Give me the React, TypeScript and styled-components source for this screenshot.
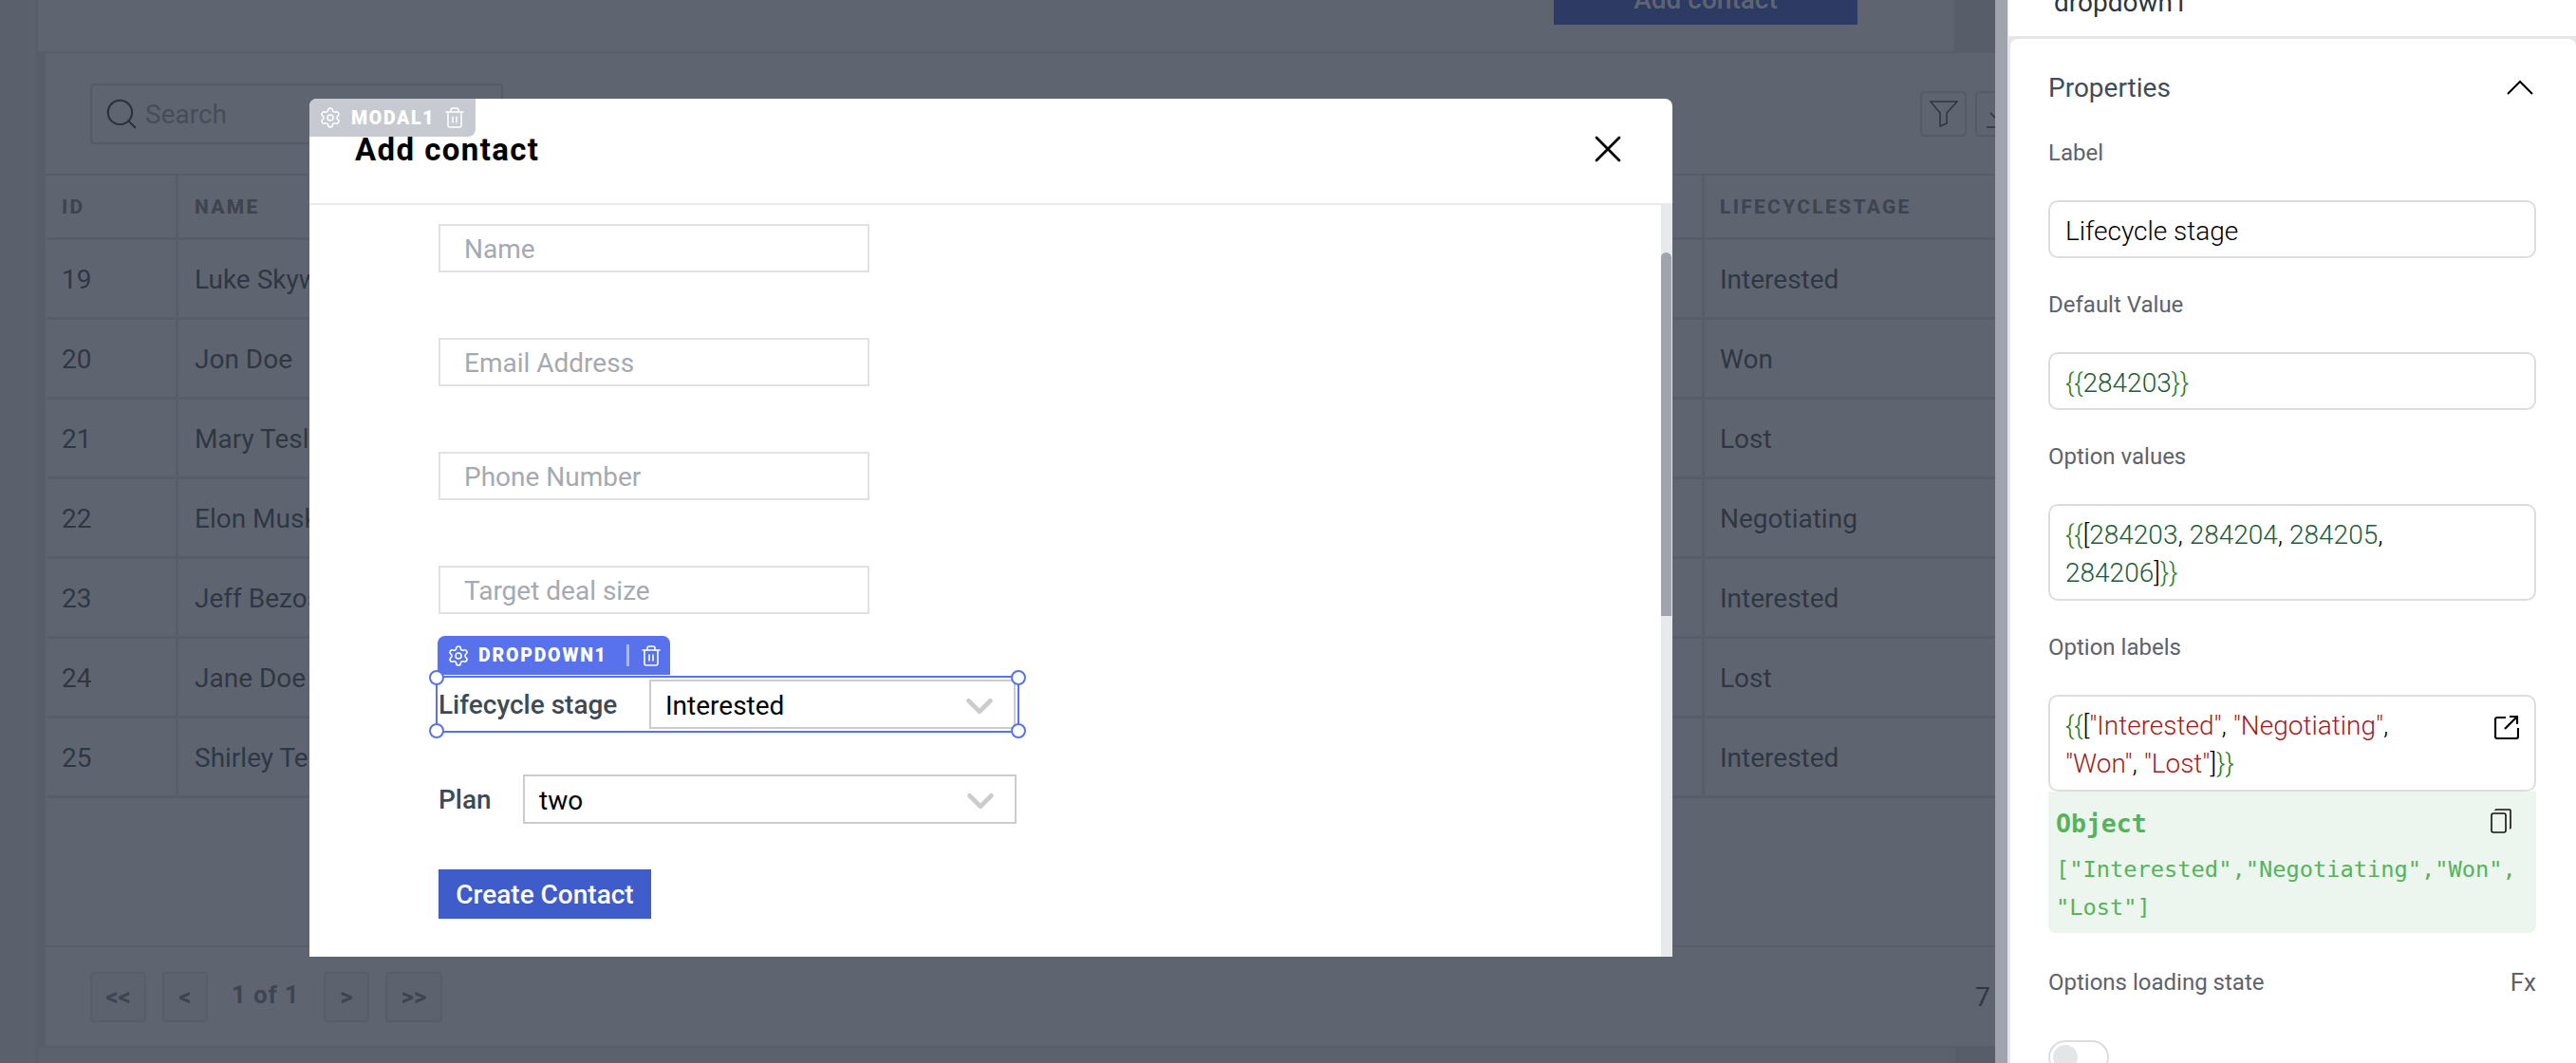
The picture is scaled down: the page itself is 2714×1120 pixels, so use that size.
import { Fragment } from "react";
import styled, { createGlobalStyle } from "styled-components";
import { ChevronDown, Search, Settings, Trash2, X } from "lucide-react";

const GlobalStyle = createGlobalStyle`
  html, body {
    margin: 0;
    padding: 0;
    width: 2714px;
    height: 1120px;
    overflow: hidden;
    background: #fff;
    font-family: Roboto, "Liberation Sans", sans-serif;
  }
  * {
    box-sizing: border-box;
  }
`;

const Shell = styled.div`
  display: flex;
  width: 2714px;
  height: 1120px;
  overflow: hidden;
`;

const Canvas = styled.div`
  position: relative;
  display: flex;
  flex: none;
  width: 2102px;
  height: 1120px;
  overflow: hidden;
  background: #5f6570;
`;

const Rail = styled.div`
  flex: none;
  width: 40px;
  background: #5b616c;
  border-right: 2px solid #585e69;
`;

const Content = styled.div`
  display: flex;
  flex-direction: column;
  flex: none;
  width: 2062px;
  background: #585e69;
`;

const TopPanel = styled.div`
  display: flex;
  align-items: flex-end;
  justify-content: flex-end;
  flex: none;
  width: 2020px;
  height: 54px;
  padding: 0 101px 28px 0;
  background: #5f6570;
  border-right: 2px solid #5a606b;
`;

const AddButton = styled.div`
  flex: none;
  width: 320px;
  height: 60px;
  background: #2d3a64;
  color: #5f6570;
  font-size: 28px;
  font-weight: 500;
  line-height: 68px;
  text-align: center;
`;

const Card = styled.div`
  display: flex;
  flex-direction: column;
  flex: none;
  width: 2200px;
  height: 1050px;
  margin-left: 6px;
  background: #5f6570;
  border: 2px solid #585e69;
`;

const BottomPanel = styled.div`
  flex: 1;
  width: 2020px;
  background: #5c626d;
`;

const Toolbar = styled.div`
  display: flex;
  align-items: flex-start;
  justify-content: space-between;
  flex: none;
  height: 127px;
  padding: 32px 0 0 47px;
`;

const SearchBox = styled.div`
  display: flex;
  align-items: center;
  gap: 6px;
  width: 435px;
  height: 64px;
  padding-left: 12px;
  border: 2px solid #565c67;
  border-radius: 4px;
  color: #2a303b;
  font-size: 28px;

  span {
    color: #474d58;
  }
`;

const ToolIcons = styled.div`
  display: flex;
  gap: 9px;
  margin: 8px 114px 0 0;
`;

const ToolIcon = styled.div`
  display: flex;
  align-items: center;
  justify-content: center;
  width: 49px;
  height: 48px;
  border: 2px solid #565c67;
  border-radius: 4px;
  color: #2e3440;
`;

const Table = styled.div`
  display: grid;
  grid-template-columns: 138px 1608px 1fr;
  grid-template-rows: 68px;
  grid-auto-rows: 84px;
  flex: none;
  padding-left: 2px;
  border-top: 2px solid #585e69;
`;

const HeadCell = styled.div`
  display: flex;
  align-items: center;
  padding-left: ${(p: { $pad: number }) => p.$pad}px;
  border-right: 3px solid #585e69;
  border-bottom: 3px solid #585e69;
  color: #3e4450;
  font-size: 21px;
  font-weight: 800;
  letter-spacing: 2.3px;
  white-space: nowrap;
  overflow: hidden;
`;

const Cell = styled.div`
  display: flex;
  align-items: center;
  padding: 2px 0 0 ${(p: { $pad: number }) => p.$pad}px;
  border-right: 3px solid #585e69;
  border-bottom: 3px solid #585e69;
  color: #2f3744;
  font-size: 28px;
  white-space: nowrap;
  overflow: hidden;
`;

const TableSpacer = styled.div`
  flex: 1;
  border-bottom: 2px solid #585e69;
`;

const Pager = styled.div`
  display: flex;
  align-items: center;
  flex: none;
  height: 104px;
  padding-left: 47px;
`;

const PageButton = styled.div`
  display: flex;
  align-items: center;
  justify-content: center;
  flex: none;
  width: ${(p: { $w: number; $gap: number }) => p.$w}px;
  height: 53px;
  margin-right: ${(p) => p.$gap}px;
  background: #5d636e;
  border: 2px solid #585e69;
  border-radius: 4px;
  color: #3e4450;
  font-size: 26px;
  font-weight: 700;
`;

const PageLabel = styled.div`
  flex: none;
  width: 105px;
  padding: 0 0 4px 8px;
  color: #3e4450;
  font-size: 26px;
  font-weight: 700;
  letter-spacing: 0.8px;
  white-space: nowrap;
`;

const RecordCount = styled.div`
  margin-left: 1615px;
  color: #2f3744;
  font-size: 28px;
  white-space: nowrap;
`;

const Modal = styled.div`
  position: absolute;
  top: 104px;
  left: 326px;
  display: flex;
  flex-direction: column;
  width: 1436px;
  height: 904px;
  background: #fff;
  border-radius: 8px 8px 0 0;
`;

const ModalTag = styled.div`
  position: absolute;
  top: 0;
  left: 0;
  display: flex;
  align-items: center;
  gap: 9px;
  width: 175px;
  height: 40px;
  padding-left: 10px;
  background: #c7cad0;
  border-radius: 8px 0 8px 0;
  color: #fff;
  font-size: 19.5px;
  font-weight: 900;
  letter-spacing: 1.7px;

  span {
    margin-left: 1px;
  }
`;

const ModalHeader = styled.div`
  display: flex;
  align-items: center;
  justify-content: space-between;
  flex: none;
  height: 112px;
  padding: 0 44px 4px 48px;
  border-bottom: 2px solid #e8e9ec;
`;

const ModalTitle = styled.div`
  color: #000;
  font-size: 33px;
  font-weight: 700;
  letter-spacing: 1.4px;
`;

const ModalBody = styled.div`
  display: flex;
  flex: 1;
  min-height: 0;
`;

const Form = styled.div`
  display: flex;
  flex-direction: column;
  flex: 1;
  padding: 20px 0 0 136px;
`;

const TextInput = styled.div`
  display: flex;
  align-items: center;
  flex: none;
  width: 454px;
  height: 51px;
  margin-bottom: 69px;
  padding: 2px 0 0 25px;
  border: 2px solid #e0e1e3;
  color: #a6a9b0;
  font-size: 28px;
`;

const Selected = styled.div`
  position: relative;
  display: flex;
  align-items: center;
  flex: none;
  width: 615px;
  height: 60px;
  margin: -4px 0 44px -3px;
  padding-left: 1px;
  border: 2px solid #5872ee;
`;

const WidgetTag = styled.div`
  position: absolute;
  top: -44px;
  left: 0;
  display: flex;
  align-items: center;
  width: 245px;
  height: 41px;
  padding-left: 10px;
  background: #5872ee;
  border-radius: 8px 8px 0 0;
  color: #fff;
  font-size: 19.5px;
  font-weight: 900;
  letter-spacing: 1.8px;

  b {
    margin-left: 9px;
    font-weight: 900;
  }

  i {
    flex: none;
    width: 3px;
    height: 23px;
    margin: 0 11px 0 20px;
    background: #a9b7f6;
  }
`;

const Handle = styled.div<{ $top: boolean; $left: boolean }>`
  position: absolute;
  ${(p) => (p.$top ? "top: -8px" : "bottom: -8px")};
  ${(p) => (p.$left ? "left: -9px" : "right: -9px")};
  width: 16px;
  height: 16px;
  background: #fff;
  border: 2px solid #5872ee;
  border-radius: 50%;
`;

const SelectRow = styled.div`
  display: flex;
  align-items: center;
  flex: none;
  width: 609px;
  height: 52px;
  margin-bottom: 48px;
`;

const SelectLabel = styled.div`
  flex: none;
  width: ${(p: { $w: number }) => p.$w}px;
  color: #3d4a55;
  font-size: 28px;
  font-weight: 500;
  white-space: nowrap;
`;

const SelectBox = styled.div<{ $w?: number }>`
  display: flex;
  align-items: center;
  justify-content: space-between;
  flex: ${(p) => (p.$w ? "none" : "1")};
  width: ${(p) => (p.$w ? `${p.$w}px` : "auto")};
  height: 52px;
  padding: 3px 13px 0 15px;
  border: 2px solid #cccccc;
  color: #000;
  font-size: 28px;

  svg {
    flex: none;
    margin: -10px 0;
  }
`;

const CreateButton = styled.div`
  display: flex;
  align-items: center;
  justify-content: center;
  flex: none;
  width: 224px;
  height: 52px;
  background: #3f5ccb;
  color: #fff;
  font-size: 28px;
  font-weight: 500;
`;

const ScrollTrack = styled.div`
  flex: none;
  width: 12px;
  background: #e8e9ec;
`;

const ScrollThumb = styled.div`
  width: 11px;
  height: 383px;
  margin-top: 50px;
  background: #a0a4ac;
  border-radius: 6px 6px 0 0;
`;

const Sidebar = styled.div`
  display: flex;
  flex-direction: column;
  flex: none;
  width: 612px;
  height: 1120px;
  background: #e6e6e8;
  border-left: 13px solid #a0a4ac;
`;

const NamePanel = styled.div`
  display: flex;
  align-items: flex-end;
  flex: none;
  height: 38px;
  margin-left: 1px;
  padding: 0 0 19px 48px;
  background: #fff;
  color: #2b3540;
  font-size: 28px;
`;

const PropsCard = styled.div`
  flex: 1;
  min-height: 0;
  margin: 3px 0 0 3px;
  padding: 29px 42px 0 40px;
  background: #fff;
  border-radius: 8px 8px 0 0;
  overflow: hidden;
`;

const SectionHead = styled.div`
  display: flex;
  align-items: center;
  justify-content: space-between;
  height: 44px;
  margin-bottom: 25px;
  padding-right: 3px;
  color: #414d5a;
  font-size: 28px;
`;

const FieldLabel = styled.div`
  height: 40px;
  margin-bottom: 32px;
  color: #5d626c;
  font-size: 24px;
  line-height: 44px;
`;

const FieldInput = styled.div<{ $h: number; $flat?: boolean }>`
  position: relative;
  height: ${(p) => p.$h}px;
  margin-bottom: ${(p) => (p.$flat ? 0 : 27)}px;
  padding: 11px 16px 0;
  border: 2px solid #dcdddf;
  border-radius: 10px;
  color: #000;
  font-size: 28px;
  font-weight: 300;
  line-height: 40px;
`;

const Brace = styled.span`
  color: #2e7d1e;
`;

const Num = styled.span`
  color: #1f5a3d;
`;

const Str = styled.span`
  color: #9f1c1c;
`;

const ExpandIcon = styled.svg`
  position: absolute;
  top: 19px;
  right: 16px;
`;

const Preview = styled.div`
  position: relative;
  height: 149px;
  padding: 14px 8px 0;
  background: #ecf6ee;
  border-radius: 0 0 8px 8px;
  color: #55b35a;
  font-family: "DejaVu Sans Mono", "Liberation Mono", monospace;
  font-size: 23.7px;
  line-height: 40px;
`;

const PreviewType = styled.div`
  height: 48px;
  font-size: 26.5px;
  font-weight: 700;
`;

const CopyIcon = styled.svg`
  position: absolute;
  top: 18px;
  right: 26px;
`;

const StateRow = styled.div`
  display: flex;
  align-items: center;
  justify-content: space-between;
  height: 40px;
  margin: 31px 0 42px;
  padding-top: 2px;
  color: #5d626c;
  font-size: 24px;

  b {
    font-size: 26px;
    font-weight: 400;
  }
`;

const Toggle = styled.div`
  width: 64px;
  height: 36px;
  padding: 3px;
  border: 2px solid #dcdddf;
  border-radius: 18px;

  i {
    display: block;
    width: 26px;
    height: 26px;
    background: #e4e5e7;
    border-radius: 50%;
  }
`;

const rows = [
  ["19", "Luke Skywalker", "Interested"],
  ["20", "Jon Doe", "Won"],
  ["21", "Mary Tesla", "Lost"],
  ["22", "Elon Musk", "Negotiating"],
  ["23", "Jeff Bezos", "Interested"],
  ["24", "Jane Doe", "Lost"],
  ["25", "Shirley Temple", "Interested"],
];

const fields = ["Name", "Email Address", "Phone Number", "Target deal size"];

export default function App() {
  return (
    <Shell>
      <GlobalStyle />
      <Canvas>
        <Rail />
        <Content>
          <TopPanel>
            <AddButton>Add contact</AddButton>
          </TopPanel>
          <Card>
            <Toolbar>
              <SearchBox>
                <Search size={38} strokeWidth={1.3} />
                <span>Search</span>
              </SearchBox>
              <ToolIcons>
                <ToolIcon>
                  <svg width="30" height="28" viewBox="0 0 30 28" fill="none" stroke="currentColor" strokeWidth="1.5">
                    <path d="M1 1h28L18 13v11l-7 3V13z" />
                  </svg>
                </ToolIcon>
                <ToolIcon>
                  <svg width="38" height="38" viewBox="0 0 38 38" fill="none" stroke="currentColor" strokeWidth="1.6">
                    <path d="M19 6v20M10 18l9 9 9-9M6 33h26" />
                  </svg>
                </ToolIcon>
              </ToolIcons>
            </Toolbar>
            <Table>
              <HeadCell $pad={15}>ID</HeadCell>
              <HeadCell $pad={17}>NAME</HeadCell>
              <HeadCell $pad={16}>LIFECYCLESTAGE</HeadCell>
              {rows.map(([id, name, stage]) => (
                <Fragment key={id}>
                  <Cell $pad={15}>{id}</Cell>
                  <Cell $pad={17}>{name}</Cell>
                  <Cell $pad={16}>{stage}</Cell>
                </Fragment>
              ))}
            </Table>
            <TableSpacer />
            <Pager>
              <PageButton $w={59} $gap={17}>&lt;&lt;</PageButton>
              <PageButton $w={48} $gap={17}>&lt;</PageButton>
              <PageLabel>1 of 1</PageLabel>
              <PageButton $w={48} $gap={17}>&gt;</PageButton>
              <PageButton $w={60} $gap={0}>&gt;&gt;</PageButton>
              <RecordCount>7</RecordCount>
            </Pager>
          </Card>
          <BottomPanel />
        </Content>

        <Modal>
          <ModalTag>
            <Settings size={24} strokeWidth={1.5} />
            <span>MODAL1</span>
            <Trash2 size={24} strokeWidth={1.5} />
          </ModalTag>
          <ModalHeader>
            <ModalTitle>Add contact</ModalTitle>
            <X size={48} strokeWidth={1.4} color="#000" />
          </ModalHeader>
          <ModalBody>
            <Form>
              {fields.map((f) => (
                <TextInput key={f}>{f}</TextInput>
              ))}
              <Selected>
                <WidgetTag>
                  <Settings size={24} strokeWidth={1.6} />
                  <b>DROPDOWN1</b>
                  <i />
                  <Trash2 size={24} strokeWidth={1.6} />
                </WidgetTag>
                <Handle $top $left />
                <Handle $top $left={false} />
                <Handle $top={false} $left />
                <Handle $top={false} $left={false} />
                <SelectLabel $w={222}>Lifecycle stage</SelectLabel>
                <SelectBox $w={386}>
                  Interested
                  <ChevronDown size={46} strokeWidth={2.4} color="#cccccc" />
                </SelectBox>
              </Selected>
              <SelectRow>
                <SelectLabel $w={89}>Plan</SelectLabel>
                <SelectBox>
                  two
                  <ChevronDown size={46} strokeWidth={2.4} color="#cccccc" />
                </SelectBox>
              </SelectRow>
              <CreateButton>Create Contact</CreateButton>
            </Form>
            <ScrollTrack>
              <ScrollThumb />
            </ScrollTrack>
          </ModalBody>
        </Modal>
      </Canvas>

      <Sidebar>
        <NamePanel>dropdown1</NamePanel>
        <PropsCard>
          <SectionHead>
            Properties
            <svg width="28" height="16" viewBox="0 0 28 16" fill="none" stroke="#000" strokeWidth="2">
              <path d="M1 15 14 2l13 13" />
            </svg>
          </SectionHead>
          <FieldLabel>Label</FieldLabel>
          <FieldInput $h={61}>Lifecycle stage</FieldInput>
          <FieldLabel>Default Value</FieldLabel>
          <FieldInput $h={61}>
            <Brace>{"{{"}</Brace>
            <Num>284203</Num>
            <Brace>{"}}"}</Brace>
          </FieldInput>
          <FieldLabel>Option values</FieldLabel>
          <FieldInput $h={102}>
            <Brace>{"{{"}</Brace>[<Num>284203</Num>, <Num>284204</Num>, <Num>284205</Num>,
            <br />
            <Num>284206</Num>]<Brace>{"}}"}</Brace>
          </FieldInput>
          <FieldLabel>Option labels</FieldLabel>
          <FieldInput $h={102} $flat>
            <Brace>{"{{"}</Brace>[<Str>"Interested"</Str>, <Str>"Negotiating"</Str>,
            <br />
            <Str>"Won"</Str>, <Str>"Lost"</Str>]<Brace>{"}}"}</Brace>
            <ExpandIcon width="26" height="26" viewBox="0 0 26 26" fill="none" stroke="#000" strokeWidth="2.2">
              <path d="M12 3H3a2 2 0 0 0-2 2v18a2 2 0 0 0 2 2h20a2 2 0 0 0 2-2v-9M11 15 24 2M16 2h8v8" />
            </ExpandIcon>
          </FieldInput>
          <Preview>
            <PreviewType>Object</PreviewType>
            <CopyIcon width="22" height="26" viewBox="0 0 22 26" fill="none" stroke="#111" strokeWidth="1.6">
              <rect x="1" y="5" width="15" height="20" rx="2" />
              <path d="M5 2a1 1 0 0 1 1-1h14a1 1 0 0 1 1 1v18a1 1 0 0 1-1 1" />
            </CopyIcon>
            ["Interested","Negotiating","Won",
            <br />
            "Lost"]
          </Preview>
          <StateRow>
            Options loading state
            <b>Fx</b>
          </StateRow>
          <Toggle>
            <i />
          </Toggle>
        </PropsCard>
      </Sidebar>
    </Shell>
  );
}
